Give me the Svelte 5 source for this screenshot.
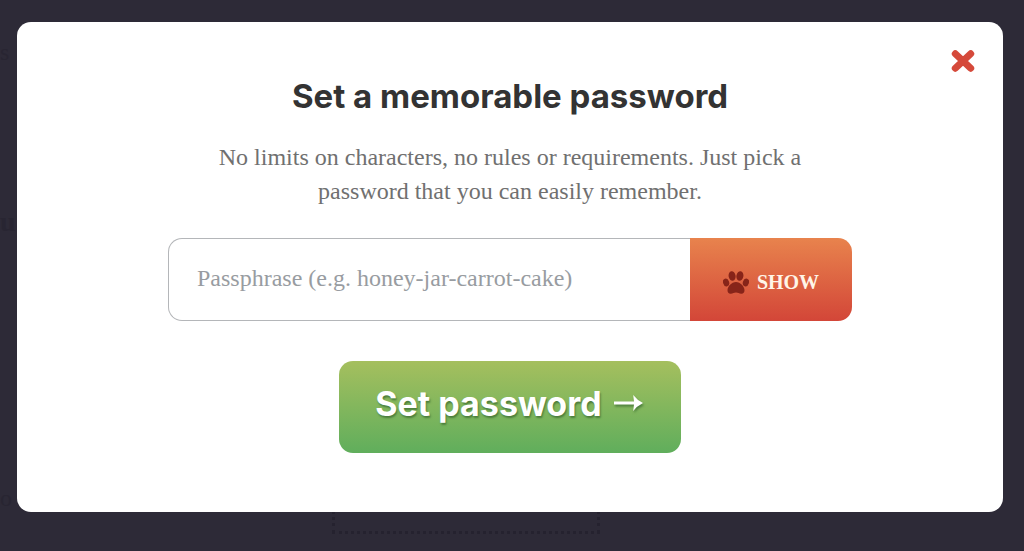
<script>
  let passphrase = $state('');
  let visible = $state(false);
  let open = $state(true);
</script>

<div class="page">
  <div class="backdrop" aria-hidden="true">
    <span class="ghost first">s</span>
    <span class="ghost second">u</span>
    <span class="ghost third">o</span>
    <div class="dotted"></div>
  </div>

  {#if open}
    <div class="modal" role="dialog" aria-modal="true" aria-labelledby="title">
      <button class="close" type="button" aria-label="Close" onclick={() => (open = false)}>
        <svg width="24" height="22" viewBox="0 0 24 22" aria-hidden="true">
          <path d="M4.300 3.800 19.700 18.200M19.700 3.800 4.300 18.200" />
        </svg>
      </button>

      <h1 id="title">Set a memorable password</h1>
      <p>No limits on characters, no rules or requirements. Just pick a password that you can easily remember.</p>

      <form onsubmit={(e) => e.preventDefault()}>
        <div class="field">
          <input
            type={visible ? 'text' : 'password'}
            aria-label="Passphrase"
            placeholder="Passphrase (e.g. honey-jar-carrot-cake)"
            bind:value={passphrase}
          />
          <button class="show" type="button" aria-pressed={visible} onclick={() => (visible = !visible)}>
            <svg width="26" height="23" viewBox="0 0 26 23" aria-hidden="true">
              <ellipse cx="9.100" cy="5" rx="3.500" ry="4.900" transform="rotate(-9 9.1 5)" />
              <ellipse cx="16.900" cy="5" rx="3.500" ry="4.900" transform="rotate(9 16.9 5)" />
              <ellipse cx="3.100" cy="11.500" rx="3" ry="4" transform="rotate(-18 3.1 11.5)" />
              <ellipse cx="22.900" cy="11.500" rx="3" ry="4" transform="rotate(18 22.9 11.5)" />
              <path d="M13 11c4.400 0 8.500 4.600 8.500 8.200 0 2.400-1.300 3.700-3.400 3.500-1.900-.2-3-1.200-5.100-1.200s-3.200 1-5.100 1.200c-2.100.2-3.400-1.100-3.400-3.500C4.500 15.600 8.600 11 13 11z" />
            </svg>
            <span>SHOW</span>
          </button>
        </div>

        <button class="submit" type="submit">
          <span>Set password</span>
          <svg width="29" height="16" viewBox="0 0 29 16" aria-hidden="true">
            <path d="M0 6.500h20L19.200 0Q23 5 29 8 23 11 19.200 16L20 9.500H0z" />
          </svg>
        </button>
      </form>
    </div>
  {/if}
</div>

<style>
  :global(body) {
    margin: 0;
    background: #2d2a37;
  }

  .page {
    position: relative;
    box-sizing: border-box;
    min-height: 100vh;
    padding: 22px 21px 39px 17px;
    overflow: hidden;
    font-family: "Liberation Serif", serif;
  }

  .backdrop {
    position: absolute;
    inset: 0;
    color: #282532;
  }

  .ghost {
    position: absolute;
    left: 0;
    font-size: 24px;
    line-height: 28px;
  }

  .first {
    top: 38px;
  }

  .second {
    top: 208px;
    font-size: 28px;
    font-weight: 700;
  }

  .third {
    top: 484px;
  }

  .dotted {
    position: absolute;
    left: 332px;
    bottom: 17px;
    width: 262px;
    height: 60px;
    border: 3px dotted #25222f;
  }

  .modal {
    position: relative;
    box-sizing: border-box;
    padding: 52px 40px 59px;
    border-radius: 14px;
    background: #fff;
    text-align: center;
  }

  .close {
    position: absolute;
    top: 28px;
    right: 28px;
    display: flex;
    padding: 0;
    border: 0;
    background: none;
    cursor: pointer;
  }

  .close path {
    fill: none;
    stroke: #d5493a;
    stroke-width: 7;
    stroke-linecap: round;
  }

  h1 {
    margin: 0 0 22px;
    color: #333;
    font: 700 33px/44px Inter, sans-serif;
  }

  p {
    max-width: 600px;
    margin: 0 auto 30px;
    color: #707070;
    font-size: 24px;
    line-height: 34px;
  }

  form {
    display: flex;
    flex-direction: column;
    align-items: center;
    gap: 40px;
  }

  .field {
    display: flex;
    width: 100%;
    max-width: 684px;
  }

  input {
    flex: 1;
    min-width: 0;
    box-sizing: border-box;
    height: 83px;
    padding: 0 28px 2px;
    border: 1px solid #b4b6b9;
    border-right: 0;
    border-radius: 14px 0 0 14px;
    outline-offset: -2px;
    color: #333;
    font: 24px "Liberation Serif", serif;
  }

  input::placeholder {
    color: #989ca1;
    opacity: 1;
  }

  .show {
    display: flex;
    align-items: center;
    justify-content: center;
    gap: 8px;
    width: 162px;
    padding: 6px 0 0;
    border: 0;
    border-radius: 0 14px 14px 0;
    background: linear-gradient(#e8834d, #d34638);
    color: #fff5e8;
    font: 700 20px "Liberation Serif", serif;
    cursor: pointer;
  }

  .show svg {
    fill: #872419;
  }

  .submit {
    display: flex;
    align-items: center;
    justify-content: center;
    gap: 12px;
    height: 92px;
    padding: 0 38px 8px 36px;
    border: 0;
    border-radius: 14px;
    background: linear-gradient(#a5bf5e, #60ae5c);
    color: #fff;
    font: 700 34px Inter, sans-serif;
    text-shadow: 1px 2px 2px #4b7d3c;
    cursor: pointer;
  }

  .submit svg {
    fill: #fff;
    filter: drop-shadow(1px 2px 1px #4b7d3c);
  }
</style>
